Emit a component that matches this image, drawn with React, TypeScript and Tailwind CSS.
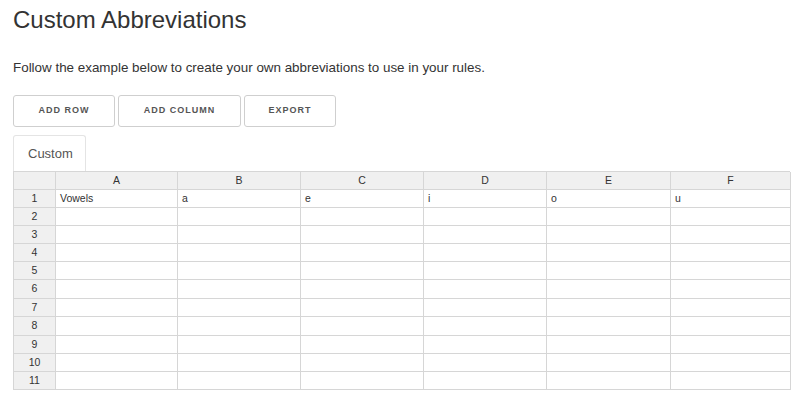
import React from 'react'

const cols = ['A', 'B', 'C', 'D', 'E', 'F']
const rowHeights = [18, 18, 18, 18, 18, 19, 18, 19, 18, 18, 18]
const firstRow = ['Vowels', 'a', 'e', 'i', 'o', 'u']

const Button: React.FC<{ label: string; width: string }> = ({ label, width }) => (
  <button
    className={`${width} h-[32px] rounded-[3px] border border-[#cfcfcf] bg-white text-[9px] font-bold tracking-[1px] text-[#555]`}
  >
    {label}
  </button>
)

const App: React.FC = () => {
  return (
    <div className="h-[404px] w-[800px] bg-white pl-[13px] pt-[6px] font-['Liberation_Sans',Arial,sans-serif] text-[#333]">
      <h1 className="text-[24px] leading-[28px] font-normal text-[#333]">Custom Abbreviations</h1>
      <p className="mt-[26px] text-[13.4px] leading-[16px] text-[#333]">
        Follow the example below to create your own abbreviations to use in your rules.
      </p>

      <div className="mt-[19px] flex gap-[3px]">
        <Button label="ADD ROW" width="w-[102px]" />
        <Button label="ADD COLUMN" width="w-[123px]" />
        <Button label="EXPORT" width="w-[92px]" />
      </div>

      <div className="mt-[8px] flex">
        <div className="flex h-[36px] w-[73px] items-center rounded-t-[3px] border-x border-t border-[#e4e4e4] pl-[14px] pt-[1px] text-[13px] text-[#555]">
          Custom
        </div>
      </div>

      <div className="grid w-[777px] grid-cols-[42px_122px_123px_123px_123px_124px_120px] border-l border-t border-[#d6d6d6] text-[10.5px] text-[#333]">
        {/* header row */}
        <div className="h-[18px] border-r border-b border-[#d6d6d6] bg-[#f0f0f0]" />
        {cols.map(c => (
          <div
            key={c}
            className="flex h-[18px] items-center justify-center border-r border-b border-[#d6d6d6] bg-[#f0f0f0]"
          >
            {c}
          </div>
        ))}

        {rowHeights.map((h, i) => (
          <React.Fragment key={i}>
            <div
              className="flex items-center justify-center border-r border-b border-[#d6d6d6] bg-[#f0f0f0]"
              style={{ height: h }}
            >
              {i + 1}
            </div>
            {cols.map((c, j) => (
              <div
                key={c}
                className="flex items-center border-r border-b border-[#d6d6d6] bg-white pl-[4px]"
                style={{ height: h }}
              >
                {i === 0 ? firstRow[j] : ''}
              </div>
            ))}
          </React.Fragment>
        ))}
      </div>
    </div>
  )
}

export default App
